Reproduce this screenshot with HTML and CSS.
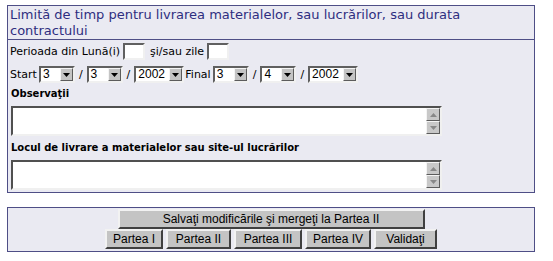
FILE: index.html
```html
<!DOCTYPE html>
<html lang="ro">
<head>
    <meta charset="UTF-8">
    <title>Limită de timp</title>
    <link rel="stylesheet" href="styles.css">
</head>
<body>

<div class="panel">
    <div class="panel-title">Limită de timp pentru livrarea materialelor, sau lucrărilor, sau durata contractului</div>
    <div class="panel-body">
        <div class="row">
            <span>Perioada din Lună(i)</span>
            <span class="field"></span>
            <span class="label-gap">şi/sau zile</span>
            <span class="field"></span>
        </div>
        <div class="row">
            <span>Start</span>
            <span class="select small"><span class="value">3</span><span class="arrow"><svg width="7" height="4" viewBox="0 0 7 4"><path d="M0 0h7L3.5 4z" fill="#000"/></svg></span></span>
            <span class="slash">/</span>
            <span class="select small"><span class="value">3</span><span class="arrow"><svg width="7" height="4" viewBox="0 0 7 4"><path d="M0 0h7L3.5 4z" fill="#000"/></svg></span></span>
            <span class="slash">/</span>
            <span class="select year"><span class="value">2002</span><span class="arrow"><svg width="7" height="4" viewBox="0 0 7 4"><path d="M0 0h7L3.5 4z" fill="#000"/></svg></span></span>
            <span>Final</span>
            <span class="select small"><span class="value">3</span><span class="arrow"><svg width="7" height="4" viewBox="0 0 7 4"><path d="M0 0h7L3.5 4z" fill="#000"/></svg></span></span>
            <span class="slash">/</span>
            <span class="select small"><span class="value">4</span><span class="arrow"><svg width="7" height="4" viewBox="0 0 7 4"><path d="M0 0h7L3.5 4z" fill="#000"/></svg></span></span>
            <span class="slash">/</span>
            <span class="select year"><span class="value">2002</span><span class="arrow"><svg width="7" height="4" viewBox="0 0 7 4"><path d="M0 0h7L3.5 4z" fill="#000"/></svg></span></span>
        </div>
        <div class="field-label">Observaţii</div>
        <div class="textbox">
            <div class="scroll">
                <span class="scroll-btn"><svg width="7" height="4" viewBox="0 0 7 4"><path d="M0 4h7L3.5 0z" fill="#888"/></svg></span>
                <span class="scroll-btn"><svg width="7" height="4" viewBox="0 0 7 4"><path d="M0 0h7L3.5 4z" fill="#888"/></svg></span>
            </div>
        </div>
        <div class="field-label">Locul de livrare a materialelor sau site-ul lucrărilor</div>
        <div class="textbox">
            <div class="scroll">
                <span class="scroll-btn"><svg width="7" height="4" viewBox="0 0 7 4"><path d="M0 4h7L3.5 0z" fill="#888"/></svg></span>
                <span class="scroll-btn"><svg width="7" height="4" viewBox="0 0 7 4"><path d="M0 0h7L3.5 4z" fill="#888"/></svg></span>
            </div>
        </div>
    </div>
</div>

<div class="panel actions">
    <div class="action-row">
        <button class="btn btn-wide">Salvaţi modificările şi mergeţi la Partea II</button>
    </div>
    <div class="action-row">
        <button class="btn btn-i">Partea I</button>
        <button class="btn btn-ii">Partea II</button>
        <button class="btn btn-iii">Partea III</button>
        <button class="btn btn-iv">Partea IV</button>
        <button class="btn btn-v">Validaţi</button>
    </div>
</div>

</body>
</html>
```

FILE: styles.css
```css
* {
    box-sizing: border-box;
}
html, body {
    margin: 0;
    background-color: #fff;
}
body {
    padding: 5px 0 0 7px;
    font-family: 'DejaVu Sans', Verdana, sans-serif;
    font-size: 11px;
    color: #000;
}
.panel {
    width: 528px;
    background-color: #eaeaf2;
    border: 1px solid #4e4e86;
}
.panel-title {
    color: #2e2e80;
    font-size: 13px;
    line-height: 16px;
    padding: 1px 2px 0;
    border-bottom: 1px solid #4e4e86;
}
.panel-body {
    padding: 0 2px 2px;
}
.row {
    display: flex;
    align-items: center;
    height: 23px;
}
.field {
    display: inline-block;
    width: 22px;
    height: 17px;
    background-color: #fff;
    border: 2px solid;
    border-color: #606060 #f0f0f0 #f0f0f0 #606060;
    margin: 0 3px 0 3px;
}
.label-gap {
    margin-left: 2px;
}
.select {
    display: inline-flex;
    align-items: stretch;
    height: 17px;
    background-color: #fff;
    border: 2px solid;
    border-color: #606060 #f0f0f0 #f0f0f0 #606060;
    font-family: 'Liberation Sans', Arial, sans-serif;
    font-size: 12px;
    margin: 0 1px 0 2px;
}
.select.small {
    width: 36px;
}
.select.year {
    width: 50px;
}
.select .value {
    flex: 1;
    line-height: 13px;
    padding-left: 2px;
}
.select .arrow {
    width: 13px;
    display: flex;
    align-items: center;
    justify-content: center;
    background-color: #c4c4c4;
    border: 1px solid;
    border-color: #f4f4f4 #5c5c5c #5c5c5c #f4f4f4;
}
.slash {
    margin: 0 2px 0 3px;
}
.field-label {
    font-weight: bold;
    font-size: 10px;
    line-height: 15px;
    margin-left: 1px;
}
.textbox {
    position: relative;
    width: 431px;
    height: 30px;
    margin: 5px 0 4px 1px;
    background-color: #fff;
    border: 2px solid;
    border-color: #505050 #f0f0f0 #f0f0f0 #505050;
}
.textbox:last-child {
    margin-bottom: 0;
}
.scroll {
    position: absolute;
    right: 0;
    top: 0;
    bottom: 0;
    width: 14px;
    display: flex;
    flex-direction: column;
    justify-content: space-between;
    background-color: #fff;
}
.scroll-btn {
    height: 13px;
    display: flex;
    align-items: center;
    justify-content: center;
    background-color: #c8c8c8;
    border: 1px solid;
    border-color: #f4f4f4 #5c5c5c #5c5c5c #f4f4f4;
}
.actions {
    margin-top: 14px;
    padding: 1px 0 2px;
}
.action-row {
    display: flex;
    justify-content: center;
    gap: 3px;
}
.btn {
    font-family: 'Liberation Sans', Arial, sans-serif;
    font-size: 12px;
    color: #000;
    background-color: #c4c4c4;
    height: 20px;
    padding: 0;
    border: 2px solid;
    border-color: #f2f2f2 #404040 #404040 #f2f2f2;
    cursor: pointer;
}
.btn-wide {
    width: 307px;
}
.btn-i {
    width: 58px;
}
.btn-ii {
    width: 65px;
}
.btn-iii {
    width: 68px;
}
.btn-iv {
    width: 66px;
}
.btn-v {
    width: 63px;
}
```
